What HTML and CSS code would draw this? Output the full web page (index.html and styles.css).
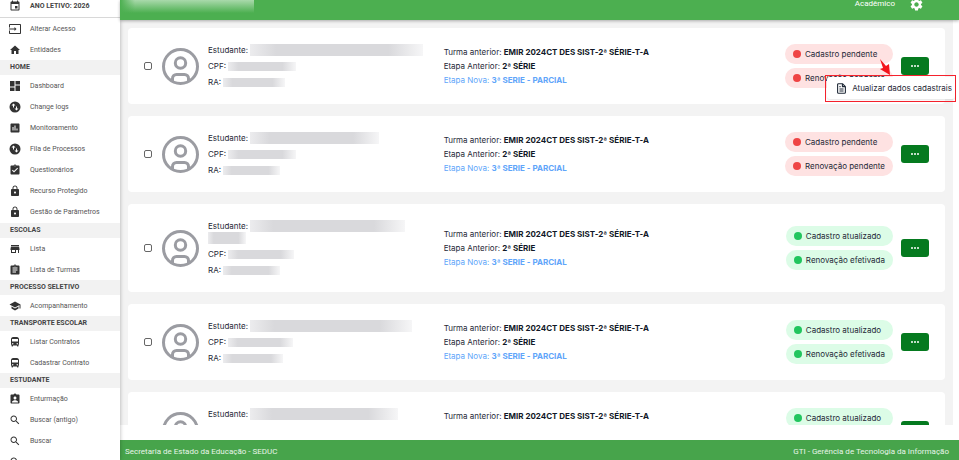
FILE: index.html
```
<!DOCTYPE html>
<html lang="pt-BR">
<head>
    <meta charset="UTF-8">
    <meta name="viewport" content="width=device-width, initial-scale=1.0">
    <title>Renovação de matrícula</title>
    <link rel="stylesheet" href="styles.css">
</head>
<body>
    <!-- icons shared by the menu and the cards -->
    <svg class="sprite" aria-hidden="true">
        <symbol id="i-event" viewBox="0 0 24 24"><path d="M17 12h-5v5h5v-5zM16 1v2H8V1H6v2H5c-1.11 0-2 .9-2 2v14c0 1.1.89 2 2 2h14c1.1 0 2-.9 2-2V5c0-1.1-.9-2-2-2h-1V1h-2zm3 18H5V8h14v11z"/></symbol>
        <symbol id="i-input" viewBox="0 0 24 24"><path d="M22 2H2C.9 2 0 2.900 0 4v5h2V4h20v16H2v-5H0v5c0 1.100.9 2 2 2h20c1.100 0 2-.9 2-2V4c0-1.100-.9-2-2-2zM11 16l4-4-4-4v3H0v2h11v3z"/></symbol>
        <symbol id="i-home" viewBox="0 0 24 24"><path d="M10 20v-6h4v6h5v-8h3L12 3 2 12h3v8z"/></symbol>
        <symbol id="i-dashboard" viewBox="0 0 24 24"><path d="M2 13h9V2H2v11zm0 9h9v-7H2v7zm11 0h9V11h-9v11zm0-20v7h9V2h-9z"/></symbol>
        <symbol id="i-change" viewBox="0 0 24 24"><circle cx="12" cy="12" r="11"/><path fill="#fff" d="M5 9l4-4 4 4h-3v4H8V9zM19 15l-4 4-4-4h3v-4h2v4z"/></symbol>
        <symbol id="i-chart" viewBox="0 0 24 24"><path d="M19 3H5c-1.100 0-2 .9-2 2v14c0 1.100.9 2 2 2h14c1.100 0 2-.9 2-2V5c0-1.100-.9-2-2-2zM9 17H7v-7h2v7zm4 0h-2V7h2v10zm4 0h-2v-4h2v4z"/></symbol>
        <symbol id="i-check" viewBox="0 0 24 24"><path d="M19 3h-4.180C14.400 1.840 13.300 1 12 1s-2.400.84-2.820 2H5c-1.100 0-2 .9-2 2v14c0 1.100.9 2 2 2h14c1.100 0 2-.9 2-2V5c0-1.100-.9-2-2-2zm-7 0c.55 0 1 .45 1 1s-.45 1-1 1-1-.45-1-1 .45-1 1-1zm-2 14l-4-4 1.410-1.410L10 14.170l6.590-6.590L18 9l-8 8z"/></symbol>
        <symbol id="i-lock" viewBox="0 0 24 24"><path d="M18 8h-1V6c0-2.760-2.240-5-5-5S7 3.240 7 6v2H6c-1.100 0-2 .9-2 2v10c0 1.100.9 2 2 2h12c1.100 0 2-.9 2-2V10c0-1.100-.9-2-2-2zm-6 9c-1.100 0-2-.9-2-2s.9-2 2-2 2 .9 2 2-.9 2-2 2zm3.100-9H8.900V6c0-1.710 1.390-3.100 3.100-3.100s3.100 1.390 3.100 3.100v2z"/></symbol>
        <symbol id="i-store" viewBox="0 0 24 24"><path d="M20 4H4v2h16V4zm1 10v-2l-1-5H4l-1 5v2h1v6h10v-6h4v6h2v-6h1zm-9 4H6v-4h6v4z"/></symbol>
        <symbol id="i-assignment" viewBox="0 0 24 24"><path d="M19 3h-4.180C14.400 1.840 13.300 1 12 1s-2.400.84-2.820 2H5c-1.100 0-2 .9-2 2v14c0 1.100.9 2 2 2h14c1.100 0 2-.9 2-2V5c0-1.100-.9-2-2-2zm-7 0c.55 0 1 .45 1 1s-.45 1-1 1-1-.45-1-1 .45-1 1-1zm2 14H7v-2h7v2zm3-4H7v-2h10v2zm0-4H7V7h10v2z"/></symbol>
        <symbol id="i-school" viewBox="0 0 24 24"><path d="M5 13.180v4L12 21l7-3.820v-4L12 17l-7-3.820zM12 3L1 9l11 6 9-4.910V17h2V9L12 3z"/></symbol>
        <symbol id="i-bus" viewBox="0 0 24 24"><path d="M4 16c0 .88.39 1.670 1 2.220V20c0 .55.45 1 1 1h1c.55 0 1-.45 1-1v-1h8v1c0 .55.45 1 1 1h1c.55 0 1-.45 1-1v-1.780c.61-.55 1-1.340 1-2.220V6c0-3.500-3.580-4-8-4s-8 .5-8 4v10zm3.500 1c-.83 0-1.500-.67-1.500-1.500S6.670 14 7.500 14s1.500.67 1.500 1.500S8.330 17 7.500 17zm9 0c-.83 0-1.500-.67-1.500-1.500s.67-1.500 1.500-1.500 1.500.67 1.500 1.500-.67 1.500-1.500 1.500zm1.500-6H6V6h12v5z"/></symbol>
        <symbol id="i-person" viewBox="0 0 24 24"><path d="M19 3h-4.180C14.400 1.840 13.300 1 12 1s-2.400.84-2.820 2H5c-1.100 0-2 .9-2 2v14c0 1.100.9 2 2 2h14c1.100 0 2-.9 2-2V5c0-1.100-.9-2-2-2zm-7 4c1.660 0 3 1.340 3 3s-1.340 3-3 3-3-1.340-3-3 1.340-3 3-3zm6 12H6v-1.400c0-2 4-3.100 6-3.100s6 1.100 6 3.100V19z"/></symbol>
        <symbol id="i-search" viewBox="0 0 24 24"><path d="M15.500 14h-.79l-.28-.27C15.410 12.590 16 11.110 16 9.500 16 5.910 13.090 3 9.500 3S3 5.910 3 9.500 5.910 16 9.500 16c1.610 0 3.090-.59 4.230-1.570l.27.28v.79l5 4.990L20.490 19l-4.990-5zm-6 0C7.010 14 5 11.990 5 9.500S7.010 5 9.500 5 14 7.010 14 9.500 11.990 14 9.500 14z"/></symbol>
        <symbol id="i-gear" viewBox="0 0 24 24"><path d="M19.140 12.940c.04-.3.06-.61.06-.94 0-.32-.02-.64-.07-.94l2.030-1.580c.18-.14.23-.41.12-.61l-1.920-3.320c-.12-.22-.37-.29-.59-.22l-2.390.96c-.5-.38-1.030-.7-1.620-.94l-.36-2.540c-.04-.24-.24-.41-.48-.41h-3.840c-.24 0-.43.17-.47.41l-.36 2.540c-.59.24-1.130.57-1.620.94l-2.390-.96c-.22-.08-.47 0-.59.22L2.740 8.870c-.12.21-.08.47.12.61l2.030 1.580c-.05.3-.09.63-.09.94s.02.64.07.94l-2.030 1.580c-.18.14-.23.41-.12.61l1.920 3.320c.12.22.37.29.59.22l2.390-.96c.5.38 1.030.7 1.620.94l.36 2.540c.05.24.24.41.48.41h3.840c.24 0 .44-.17.47-.41l.36-2.540c.59-.24 1.130-.56 1.620-.94l2.390.96c.22.08.47 0 .59-.22l1.920-3.320c.12-.22.07-.47-.12-.61l-2.010-1.580zM12 15.600c-1.980 0-3.600-1.620-3.600-3.600s1.620-3.600 3.600-3.600 3.600 1.620 3.600 3.600-1.620 3.600-3.600 3.600z"/></symbol>
        <symbol id="i-avatar" viewBox="0 0 37 37"><g fill="none" stroke="#9b9ca2" stroke-width="3"><circle cx="18.500" cy="18.500" r="17"/><circle cx="18.500" cy="15" r="5.200"/><path d="M10.500 33v-2.500a4 4 0 0 1 4-4h8a4 4 0 0 1 4 4V33"/></g></symbol>
        <symbol id="i-file" viewBox="0 0 24 24"><g fill="none" stroke="#1f2937" stroke-width="2.400" stroke-linejoin="round"><path d="M14 1.500H5.500a2 2 0 0 0-2 2v17a2 2 0 0 0 2 2h13a2 2 0 0 0 2-2V8zV8h6.500M7.500 8H10M7.500 13h9M7.500 17.500h9"/></g></symbol>
    </svg>

    <nav class="sidebar">
        <div class="year"><svg class="icon"><use href="#i-event"/></svg>ANO LETIVO: 2026</div>
        <ul class="menu">
            <li><a href="#"><svg class="icon"><use href="#i-input"/></svg>Alterar Acesso</a></li>
            <li><a href="#"><svg class="icon"><use href="#i-home"/></svg>Entidades</a></li>
        </ul>
        <h2>HOME</h2>
        <ul class="menu menu-main">
            <li><a href="#"><svg class="icon"><use href="#i-dashboard"/></svg>Dashboard</a></li>
            <li><a href="#"><svg class="icon"><use href="#i-change"/></svg>Change logs</a></li>
            <li><a href="#"><svg class="icon"><use href="#i-chart"/></svg>Monitoramento</a></li>
            <li><a href="#"><svg class="icon"><use href="#i-change"/></svg>Fila de Processos</a></li>
            <li><a href="#"><svg class="icon"><use href="#i-check"/></svg>Questionários</a></li>
            <li><a href="#"><svg class="icon"><use href="#i-lock"/></svg>Recurso Protegido</a></li>
            <li><a href="#"><svg class="icon"><use href="#i-lock"/></svg>Gestão de Parâmetros</a></li>
        </ul>
        <h2>ESCOLAS</h2>
        <ul class="menu">
            <li><a href="#"><svg class="icon"><use href="#i-store"/></svg>Lista</a></li>
            <li><a href="#"><svg class="icon"><use href="#i-assignment"/></svg>Lista de Turmas</a></li>
        </ul>
        <h2>PROCESSO SELETIVO</h2>
        <ul class="menu">
            <li><a href="#"><svg class="icon"><use href="#i-school"/></svg>Acompanhamento</a></li>
        </ul>
        <h2>TRANSPORTE ESCOLAR</h2>
        <ul class="menu">
            <li><a href="#"><svg class="icon"><use href="#i-bus"/></svg>Listar Contratos</a></li>
            <li><a href="#"><svg class="icon"><use href="#i-bus"/></svg>Cadastrar Contrato</a></li>
        </ul>
        <h2>ESTUDANTE</h2>
        <ul class="menu">
            <li><a href="#"><svg class="icon"><use href="#i-person"/></svg>Enturmação</a></li>
            <li><a href="#"><svg class="icon"><use href="#i-search"/></svg>Buscar (antigo)</a></li>
            <li><a href="#"><svg class="icon"><use href="#i-search"/></svg>Buscar</a></li>
            <li><a href="#" aria-label="Buscar mais"><svg class="icon"><use href="#i-search"/></svg></a></li>
        </ul>
    </nav>

    <div class="page">
        <header class="topbar">
            <div class="brand"></div>
            <div class="top-actions">
                <span>Acadêmico</span>
                <svg class="gear"><use href="#i-gear"/></svg>
            </div>
        </header>

        <main class="list">
            <article class="card">
                <input type="checkbox" aria-label="Selecionar estudante 1">
                <svg class="avatar"><use href="#i-avatar"/></svg>
                <div class="student">
                    <p>Estudante: <span class="hidden-data name" style="width: 173px"></span></p>
                    <p>CPF: <span class="hidden-data" style="width: 68px"></span></p>
                    <p>RA: <span class="hidden-data" style="width: 62px"></span></p>
                </div>
                <div class="class-info">
                    <p>Turma anterior: <b>EMIR 2024CT DES SIST-2ª SÉRIE-T-A</b></p>
                    <p>Etapa Anterior: <b>2ª SÉRIE</b></p>
                    <p class="next">Etapa Nova: <b>3ª SERIE - PARCIAL</b></p>
                </div>
                <div class="status">
                    <span class="pill pending">Cadastro pendente</span>
                    <span class="pill pending">Renovação pendente</span>
                </div>
                <div class="actions">
                    <button class="more" type="button" aria-label="Ações"><i></i><i></i><i></i></button>
                    <div class="dropdown">
                        <a href="#"><svg class="file"><use href="#i-file"/></svg>Atualizar dados cadastrais</a>
                    </div>
                    <svg class="arrow" viewBox="0 0 12 16"><path fill="#f3141c" d="M1 0l6 7 3-2 1 11-10-6 3-1z"/></svg>
                </div>
            </article>

            <article class="card">
                <input type="checkbox" aria-label="Selecionar estudante 2">
                <svg class="avatar"><use href="#i-avatar"/></svg>
                <div class="student">
                    <p>Estudante: <span class="hidden-data name" style="width: 129px"></span></p>
                    <p>CPF: <span class="hidden-data" style="width: 68px"></span></p>
                    <p>RA: <span class="hidden-data" style="width: 57px"></span></p>
                </div>
                <div class="class-info">
                    <p>Turma anterior: <b>EMIR 2024CT DES SIST-2ª SÉRIE-T-A</b></p>
                    <p>Etapa Anterior: <b>2ª SÉRIE</b></p>
                    <p class="next">Etapa Nova: <b>3ª SERIE - PARCIAL</b></p>
                </div>
                <div class="status">
                    <span class="pill pending">Cadastro pendente</span>
                    <span class="pill pending">Renovação pendente</span>
                </div>
                <div class="actions">
                    <button class="more" type="button" aria-label="Ações"><i></i><i></i><i></i></button>
                </div>
            </article>

            <article class="card">
                <input type="checkbox" aria-label="Selecionar estudante 3">
                <svg class="avatar"><use href="#i-avatar"/></svg>
                <div class="student">
                    <p>Estudante: <span class="hidden-data name" style="width: 155px"></span><br><span class="hidden-data name" style="width: 38px"></span></p>
                    <p>CPF: <span class="hidden-data" style="width: 66px"></span></p>
                    <p>RA: <span class="hidden-data" style="width: 57px"></span></p>
                </div>
                <div class="class-info">
                    <p>Turma anterior: <b>EMIR 2024CT DES SIST-2ª SÉRIE-T-A</b></p>
                    <p>Etapa Anterior: <b>2ª SÉRIE</b></p>
                    <p class="next">Etapa Nova: <b>3ª SERIE - PARCIAL</b></p>
                </div>
                <div class="status">
                    <span class="pill done">Cadastro atualizado</span>
                    <span class="pill done">Renovação efetivada</span>
                </div>
                <div class="actions">
                    <button class="more" type="button" aria-label="Ações"><i></i><i></i><i></i></button>
                </div>
            </article>

            <article class="card">
                <input type="checkbox" aria-label="Selecionar estudante 4">
                <svg class="avatar"><use href="#i-avatar"/></svg>
                <div class="student">
                    <p>Estudante: <span class="hidden-data name" style="width: 162px"></span></p>
                    <p>CPF: <span class="hidden-data" style="width: 65px"></span></p>
                    <p>RA: <span class="hidden-data" style="width: 60px"></span></p>
                </div>
                <div class="class-info">
                    <p>Turma anterior: <b>EMIR 2024CT DES SIST-2ª SÉRIE-T-A</b></p>
                    <p>Etapa Anterior: <b>2ª SÉRIE</b></p>
                    <p class="next">Etapa Nova: <b>3ª SERIE - PARCIAL</b></p>
                </div>
                <div class="status">
                    <span class="pill done">Cadastro atualizado</span>
                    <span class="pill done">Renovação efetivada</span>
                </div>
                <div class="actions">
                    <button class="more" type="button" aria-label="Ações"><i></i><i></i><i></i></button>
                </div>
            </article>

            <article class="card">
                <input type="checkbox" aria-label="Selecionar estudante 5">
                <svg class="avatar"><use href="#i-avatar"/></svg>
                <div class="student">
                    <p>Estudante: <span class="hidden-data name" style="width: 148px"></span></p>
                    <p>CPF: <span class="hidden-data" style="width: 66px"></span></p>
                    <p>RA: <span class="hidden-data" style="width: 57px"></span></p>
                </div>
                <div class="class-info">
                    <p>Turma anterior: <b>EMIR 2024CT DES SIST-2ª SÉRIE-T-A</b></p>
                    <p>Etapa Anterior: <b>2ª SÉRIE</b></p>
                    <p class="next">Etapa Nova: <b>3ª SERIE - PARCIAL</b></p>
                </div>
                <div class="status">
                    <span class="pill done">Cadastro atualizado</span>
                    <span class="pill done">Renovação efetivada</span>
                </div>
                <div class="actions">
                    <button class="more" type="button" aria-label="Ações"><i></i><i></i><i></i></button>
                </div>
            </article>
        </main>

        <footer class="footer">
            <span>Secretaria de Estado da Educação - SEDUC</span>
            <span>GTI - Gerência de Tecnologia da Informação</span>
        </footer>
    </div>
</body>
</html>
```
FILE: styles.css
```
* {
    box-sizing: border-box;
}
body {
    display: flex;
    height: 100vh;
    margin: 0;
    overflow: hidden;
    background: #fff;
    font-family: Inter, sans-serif;
    font-size: 8px;
    line-height: 12px;
    color: #1f2937;
}
p, h2, ul {
    margin: 0;
    padding: 0;
}
a {
    color: inherit;
    text-decoration: none;
}
.sprite {
    display: none;
}

/* side menu */
.sidebar {
    flex: 0 0 120px;
    overflow: hidden;
    background: #fff;
    box-shadow: 0 0 4px rgba(0, 0, 0, 0.3);
    z-index: 1;
    font-family: Roboto, sans-serif;
    font-size: 7px;
    color: #555;
}
.icon {
    width: 12px;
    height: 12px;
    margin-right: 9px;
    fill: #333;
}
.year {
    display: flex;
    align-items: center;
    height: 18px;
    padding: 0 9px 5px;
    border-bottom: 1px solid #d8d8d8;
    font-weight: 700;
    color: #444;
}
.menu {
    list-style: none;
}
.menu-main {
    padding-bottom: 1px;
}
.menu a {
    display: flex;
    align-items: center;
    height: 21px;
    padding: 0 9px;
}
.sidebar h2 {
    padding: 0 10px;
    background: #f2f2f2;
    font-size: 7px;
    line-height: 15px;
    font-weight: 700;
    color: #444;
}

/* content area */
.page {
    display: flex;
    flex: 1;
    flex-direction: column;
    min-width: 0;
}
.topbar {
    display: flex;
    justify-content: space-between;
    flex: 0 0 20px;
    padding-right: 35px;
    background: #4caf50;
    box-shadow: 0 1px 3px rgba(0, 0, 0, 0.3);
    z-index: 1;
}
.brand {
    width: 134px;
    height: 13px;
    background: linear-gradient(to right, #4caf50, transparent 15px), linear-gradient(to bottom, #a9d9ab, #4caf50);
}
.top-actions {
    display: flex;
    align-items: center;
    gap: 14px;
    height: 8px;
    font-family: Roboto, sans-serif;
    color: #fff;
}
.gear {
    width: 15px;
    height: 15px;
    fill: #fff;
}
.list {
    display: flex;
    flex: 1;
    flex-direction: column;
    gap: 12px;
    min-height: 0;
    margin: 0 6px 15px 0;
    padding: 8px 8px 0;
    overflow-x: visible;
    overflow-y: clip;
    background: #f3f3f3;
}

/* student card */
.card {
    display: flex;
    flex-shrink: 0;
    align-items: center;
    gap: 8px;
    padding: 16px;
    background: #fff;
    border-radius: 4px;
}
.card input {
    appearance: none;
    width: 8px;
    height: 8px;
    margin: 0 2px 0 0;
    border: 1px solid #666;
    border-radius: 2px;
    background: #fff;
}
.avatar {
    width: 37px;
    height: 37px;
    margin-right: 1px;
}
.student {
    display: flex;
    flex: 0 0 29%;
    flex-direction: column;
    gap: 4px;
}
.hidden-data {
    display: inline-block;
    height: 9px;
    vertical-align: middle;
    background: linear-gradient(to right, #ececee, #d9d9dc 15%, #d9d9dc 80%, #f6f6f7);
}
.name {
    height: 12px;
    vertical-align: top;
}
.class-info {
    display: flex;
    flex: 1;
    flex-direction: column;
    gap: 2px;
}
.class-info b {
    color: #111827;
}
.next, .class-info .next b {
    color: #60a5fa;
}
.status {
    display: flex;
    flex-direction: column;
    gap: 4px;
}
.pill {
    display: flex;
    align-items: center;
    gap: 4px;
    height: 20px;
    padding: 0 8px;
    border-radius: 10px;
}
.pill::before {
    content: "";
    width: 8px;
    height: 8px;
    border-radius: 50%;
}
.pending {
    background: #fee2e2;
}
.pending::before {
    background: #ef4444;
}
.done {
    background: #dcfce7;
}
.done::before {
    background: #22c55e;
}
.actions {
    position: relative;
}
.more {
    display: flex;
    align-items: center;
    justify-content: center;
    gap: 1px;
    width: 28px;
    height: 18px;
    padding: 0;
    border: 0;
    border-radius: 3px;
    background: #057a1f;
}
.more i {
    width: 2px;
    height: 2px;
    border-radius: 50%;
    background: #fff;
}

/* action menu, open over the card */
.dropdown {
    position: absolute;
    top: 18px;
    right: -27px;
    padding: 1px 0 2px 1px;
    border: 1px solid #f5222d;
    z-index: 1;
}
.dropdown a {
    display: flex;
    align-items: center;
    gap: 5px;
    height: 22px;
    padding: 0 3px 0 9px;
    border-radius: 3px;
    background: #fff;
    box-shadow: 0 1px 2px rgba(0, 0, 0, 0.1);
    white-space: nowrap;
}
.file {
    width: 11px;
    height: 11px;
}
.arrow {
    position: absolute;
    top: 2px;
    right: 38px;
    width: 12px;
    height: 16px;
}

.footer {
    display: flex;
    align-items: center;
    justify-content: space-between;
    flex: 0 0 20px;
    padding: 4px 10px 0 5px;
    background: #47a44b;
    font-family: Roboto, sans-serif;
    color: #e8f5e9;
}
```
